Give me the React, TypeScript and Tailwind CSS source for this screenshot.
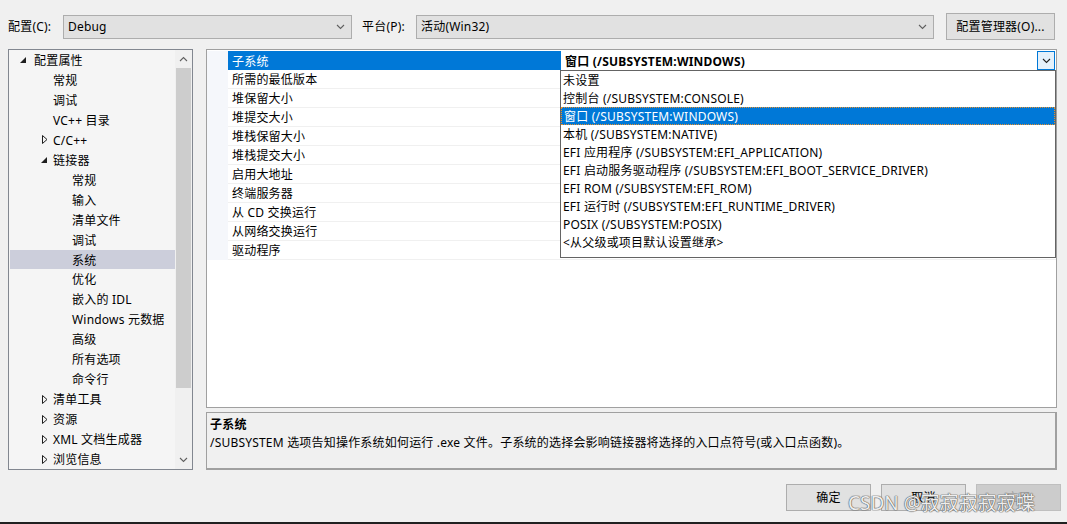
import React from "react";

const Chevron = ({ className = "", up = false }: { className?: string; up?: boolean }) => (
  <svg width="9" height="6" viewBox="0 0 9 6" className={className}>
    <path d={up ? "M1 5 L4.5 1.5 L8 5" : "M1 1 L4.5 4.5 L8 1"} fill="none" stroke="currentColor" strokeWidth="1.1" />
  </svg>
);

const TriOpen = () => (
  <svg width="6" height="6" viewBox="0 0 6 6">
    <path d="M6 0 L6 6 L0 6 Z" fill="#1e1e1e" />
  </svg>
);

const TriClosed = () => (
  <svg width="6" height="9" viewBox="0 0 6 9">
    <path d="M0.5 0.5 L5 4.5 L0.5 8.5 Z" fill="none" stroke="#1e1e1e" strokeWidth="1" />
  </svg>
);

type Node = { t: string; lvl: 0 | 1 | 2; exp?: "open" | "closed"; sel?: boolean };

const tree: Node[] = [
  { t: "配置属性", lvl: 0, exp: "open" },
  { t: "常规", lvl: 1 },
  { t: "调试", lvl: 1 },
  { t: "VC++ 目录", lvl: 1 },
  { t: "C/C++", lvl: 1, exp: "closed" },
  { t: "链接器", lvl: 1, exp: "open" },
  { t: "常规", lvl: 2 },
  { t: "输入", lvl: 2 },
  { t: "清单文件", lvl: 2 },
  { t: "调试", lvl: 2 },
  { t: "系统", lvl: 2, sel: true },
  { t: "优化", lvl: 2 },
  { t: "嵌入的 IDL", lvl: 2 },
  { t: "Windows 元数据", lvl: 2 },
  { t: "高级", lvl: 2 },
  { t: "所有选项", lvl: 2 },
  { t: "命令行", lvl: 2 },
  { t: "清单工具", lvl: 1, exp: "closed" },
  { t: "资源", lvl: 1, exp: "closed" },
  { t: "XML 文档生成器", lvl: 1, exp: "closed" },
  { t: "浏览信息", lvl: 1, exp: "closed" },
];

const indent: Record<number, string> = { 0: "pl-[5px]", 1: "pl-[24px]", 2: "pl-[43px]" };

const props = [
  "子系统",
  "所需的最低版本",
  "堆保留大小",
  "堆提交大小",
  "堆栈保留大小",
  "堆栈提交大小",
  "启用大地址",
  "终端服务器",
  "从 CD 交换运行",
  "从网络交换运行",
  "驱动程序",
];

const options = [
  "未设置",
  "控制台 (/SUBSYSTEM:CONSOLE)",
  "窗口 (/SUBSYSTEM:WINDOWS)",
  "本机 (/SUBSYSTEM:NATIVE)",
  "EFI 应用程序 (/SUBSYSTEM:EFI_APPLICATION)",
  "EFI 启动服务驱动程序 (/SUBSYSTEM:EFI_BOOT_SERVICE_DRIVER)",
  "EFI ROM (/SUBSYSTEM:EFI_ROM)",
  "EFI 运行时 (/SUBSYSTEM:EFI_RUNTIME_DRIVER)",
  "POSIX (/SUBSYSTEM:POSIX)",
  "<从父级或项目默认设置继承>",
];

const Combo = ({ w, text }: { w: string; text: string }) => (
  <div className={`${w} h-[24px] flex items-center border border-[#adadad] bg-[#e1e1e1] pl-[4px] pr-[6px]`}>
    <span className="flex-1 whitespace-nowrap pt-[1px]">{text}</span>
    <Chevron className="text-[#606060]" />
  </div>
);

export default function App() {
  return (
    <div className="relative flex flex-col w-[1067px] h-[524px] overflow-hidden bg-[#f0f0f0] text-[12px] leading-none tracking-[0.2px] text-black font-['Noto_Sans','Noto_Sans_CJK_SC',sans-serif]">
      {/* top row */}
      <div className="flex items-center h-[27px] mt-[13px]">
        <span className="ml-[8px] w-[55px] whitespace-nowrap pt-[1px]">配置(C):</span>
        <Combo w="w-[289px]" text="Debug" />
        <span className="ml-[10px] w-[54px] whitespace-nowrap pt-[1px]">平台(P):</span>
        <Combo w="w-[518px]" text="活动(Win32)" />
        <div className="ml-[12px] w-[109px] h-[27px] flex items-center justify-center border border-[#adadad] bg-[#e1e1e1] whitespace-nowrap pt-[1px]">
          配置管理器(O)...
        </div>
      </div>

      {/* main */}
      <div className="flex mt-[9px] h-[421px]">
        {/* tree */}
        <div className="ml-[8px] w-[185px] h-full border border-[#828790] bg-[#f5f5f5] flex">
          <div className="flex-1 ml-[1px] flex flex-col">
            {tree.map((n, i) => (
              <div
                key={i}
                className={`h-[20px] flex items-center whitespace-nowrap ${indent[n.lvl]} ${n.sel ? "bg-[#cccedb]" : ""}`}
              >
                <span className="w-[19px] flex items-center">
                  {n.exp === "open" && (
                    <span className={n.lvl === 0 ? "ml-[5px] flex" : "ml-[7px] flex"}>
                      <TriOpen />
                    </span>
                  )}
                  {n.exp === "closed" && (
                    <span className="ml-[8px] flex">
                      <TriClosed />
                    </span>
                  )}
                </span>
                <span className="pt-[2px]">{n.t}</span>
              </div>
            ))}
          </div>
          {/* scrollbar */}
          <div className="w-[17px] h-full bg-[#f0f0f0] flex flex-col items-center">
            <div className="h-[18px] flex items-center justify-center text-[#606060]">
              <Chevron up />
            </div>
            <div className="w-[15px] h-[320px] bg-[#cdcdcd]" />
            <div className="flex-1" />
            <div className="h-[18px] flex items-center justify-center text-[#606060]">
              <Chevron />
            </div>
          </div>
        </div>

        {/* right */}
        <div className="ml-[13px] w-[851px] flex flex-col">
          <div className="relative h-[359px] border border-[#a0a0a0] bg-white pt-[1px]">
            {props.map((p, i) => (
              <div key={i} className="flex h-[19px]">
                <div className="w-[21px] bg-[#f5f7fb]" />
                <div
                  className={`w-[333px] flex items-center pl-[4px] pt-[2px] whitespace-nowrap ${
                    i === 0 ? "bg-[#0078d7] text-white" : "border-b border-[#f0f0f0]"
                  }`}
                >
                  {p}
                </div>
                <div className={`flex-1 flex items-center ${i === 0 ? "" : "border-b border-[#f0f0f0]"}`}>
                  {i === 0 && (
                    <>
                      <span className="flex-1 pl-[4px] pt-[2px] font-bold whitespace-nowrap">窗口 (/SUBSYSTEM:WINDOWS)</span>
                      <div className="w-[18px] h-[19px] mr-[1px] border border-[#0078d7] bg-[#e5f1fb] flex items-center justify-center text-[#222]">
                        <Chevron />
                      </div>
                    </>
                  )}
                </div>
              </div>
            ))}

            {/* dropdown list */}
            <div className="absolute left-[353px] top-[20px] w-[496px] h-[188px] border border-[#646464] bg-white flex flex-col">
              {options.map((o, i) => (
                <div
                  key={i}
                  className={`h-[18px] flex items-center pl-[2px] pt-[2px] whitespace-nowrap ${
                    i === 2 ? "bg-[#0078d7] text-white border border-dotted border-[#e8902a] pl-[1px]" : ""
                  }`}
                >
                  {o}
                </div>
              ))}
            </div>
          </div>

          <div className="mt-[4px] h-[58px] border border-[#a0a0a0] border-b-[2px] border-r-[2px] bg-[#f0f0f0] pl-[3px] pt-[5px]">
            <div className="font-bold h-[13px] flex items-center">子系统</div>
            <div className="mt-[5px] h-[14px] flex items-center whitespace-nowrap">
              /SUBSYSTEM 选项告知操作系统如何运行 .exe 文件。子系统的选择会影响链接器将选择的入口点符号(或入口点函数)。
            </div>
          </div>
        </div>
      </div>

      {/* buttons */}
      <div className="flex justify-end gap-[10px] pr-[6px] mt-[14px]">
        <div className="w-[85px] h-[27px] flex items-center justify-center border border-[#adadad] bg-[#e1e1e1] pt-[1px]">确定</div>
        <div className="w-[85px] h-[27px] flex items-center justify-center border border-[#adadad] bg-[#e1e1e1] pt-[1px]">取消</div>
        <div className="w-[85px] h-[27px] flex items-center justify-center border border-[#bfbfbf] bg-[#cccccc] text-[#a0a0a0] pt-[1px]">应用</div>
      </div>

      <div className="mt-auto h-[2px] bg-[#202020]" />

      {/* watermark */}
      <div className="absolute left-[848px] top-[494px] text-[19px] leading-none tracking-normal text-white/90 whitespace-nowrap font-['Noto_Sans','Noto_Sans_CJK_SC',sans-serif] [text-shadow:0_0_1px_#555,0_0_1px_#555,0_0_1px_#555]">
        CSDN @寂寂寂寂寂蝶
      </div>
    </div>
  );
}
